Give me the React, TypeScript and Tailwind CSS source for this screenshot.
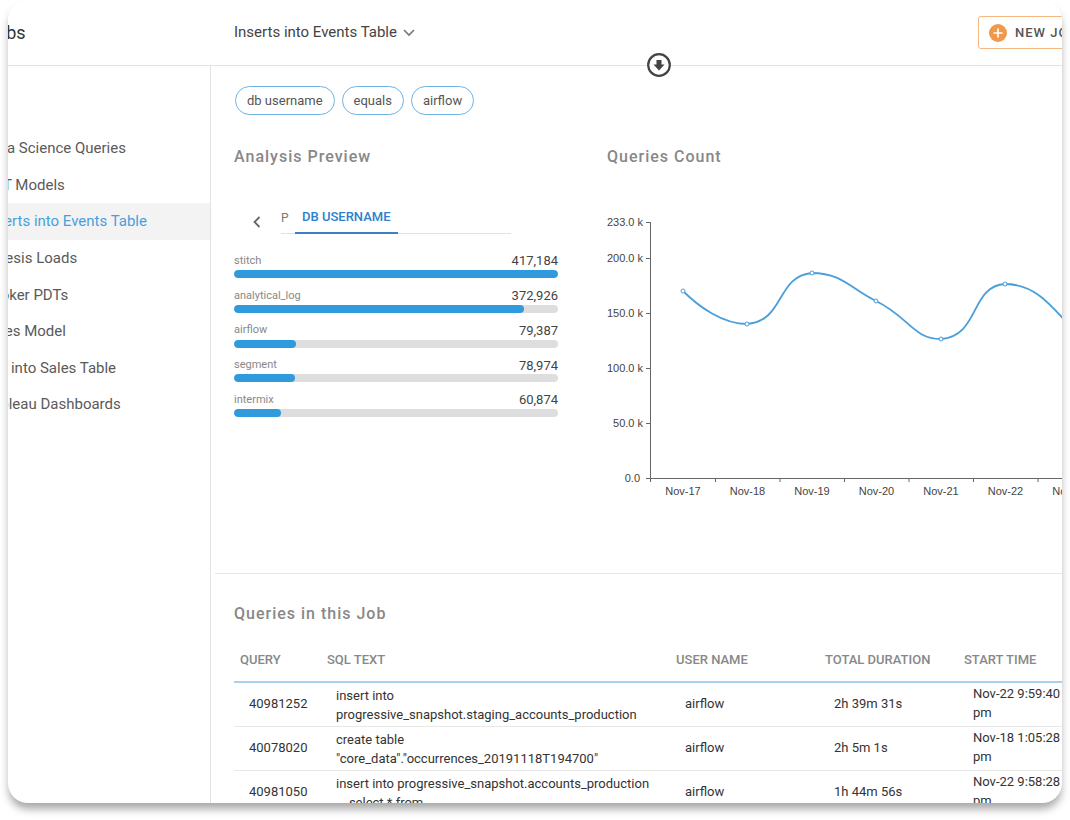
import React from 'react';

const jobs = [
  'Data Science Queries',
  'DBT Models',
  'Inserts into Events Table',
  'Kinesis Loads',
  'Looker PDTs',
  'Sales Model',
  'ELT into Sales Table',
  'Tableau Dashboards',
];

const filters = ['db username', 'equals', 'airflow'];

const users = [
  { name: 'stitch', count: 417184 },
  { name: 'analytical_log', count: 372926 },
  { name: 'airflow', count: 79387 },
  { name: 'segment', count: 78974 },
  { name: 'intermix', count: 60874 },
];

const queries = [
  {
    id: '40981252',
    sql: ['insert into', 'progressive_snapshot.staging_accounts_production'],
    user: 'airflow',
    duration: '2h 39m 31s',
    start: 'Nov-22 9:59:40 pm',
  },
  {
    id: '40078020',
    sql: ['create table', '"core_data"."occurrences_20191118T194700"'],
    user: 'airflow',
    duration: '2h 5m 1s',
    start: 'Nov-18 1:05:28 pm',
  },
  {
    id: '40981050',
    sql: ['insert into progressive_snapshot.accounts_production', '    select * from'],
    user: 'airflow',
    duration: '1h 44m 56s',
    start: 'Nov-22 9:58:28 pm',
  },
];

const yTicks = [
  { label: '233.0 k', y: 13 },
  { label: '200.0 k', y: 49 },
  { label: '150.0 k', y: 104 },
  { label: '100.0 k', y: 159 },
  { label: '50.0 k', y: 214 },
  { label: '0.0', y: 269 },
];

const days = ['Nov-17', 'Nov-18', 'Nov-19', 'Nov-20', 'Nov-21', 'Nov-22', 'Nov-23'];

const points = [
  [76, 82],
  [140, 115],
  [205, 64],
  [269, 92],
  [334, 130],
  [398, 75],
];

const Header = () => (
  <header className="flex h-[66px] shrink-0 items-center border-b border-[#e2e2e2]">
    <div className="w-[233px] shrink-0 pl-2 text-lg text-[#333]">Jobs</div>
    <button className="flex items-center gap-1.5 pl-[23px] text-[15px] text-[#444]">
      Inserts into Events Table
      <svg width="12" height="8" viewBox="0 0 12 8" fill="none" stroke="#777" strokeWidth="1.6">
        <path d="M1 1l5 5 5-5" />
      </svg>
    </button>
    <button className="ml-auto flex h-[33px] w-[124px] shrink-0 items-center gap-2 rounded-[3px] border border-[#f3b77f] pl-[10px] text-[13px] font-medium tracking-[1px] whitespace-nowrap text-[#555]">
      <svg width="18" height="18" viewBox="0 0 18 18">
        <circle cx="9" cy="9" r="9" fill="#f0994a" />
        <path d="M9 4.5v9M4.5 9h9" stroke="#fff" strokeWidth="1.7" />
      </svg>
      NEW JOB
    </button>
  </header>
);

const Sidebar = () => (
  <nav className="w-[233px] shrink-0 border-r border-[#e2e2e2] pt-16">
    <div className="grid h-[293px] grid-rows-8">
      {jobs.map((job) => (
        <a
          key={job}
          href="#"
          className={
            job === 'Inserts into Events Table'
              ? 'flex items-center bg-[#f3f3f3] pl-1.5 text-[15px] text-[#4a9fdb]'
              : 'flex items-center pl-1.5 text-[15px] text-[#5a5a5a]'
          }
        >
          {job}
        </a>
      ))}
    </div>
  </nav>
);

const AnalysisPreview = () => (
  <section className="w-[324px] shrink-0">
    <h2 className="text-base leading-5 font-medium tracking-[1px] text-[#888]">Analysis Preview</h2>
    <div className="mt-[35px] flex h-8 items-stretch">
      <button aria-label="Previous tab" className="w-[47px] pt-2 pl-[19px]">
        <svg width="8" height="12" viewBox="0 0 8 12" fill="none" stroke="#666" strokeWidth="1.8">
          <path d="M6.5 1l-5 5 5 5" />
        </svg>
      </button>
      <div className="flex w-[230px] border-b border-[#e2e2e2] text-[13px] font-medium">
        <button className="w-[14px] text-left text-xs font-normal text-[#777]">P</button>
        <button className="-mb-px border-b-2 border-[#3b7fc9] px-[7px] whitespace-nowrap text-[#2f80cc]">
          DB USERNAME
        </button>
      </div>
    </div>
    <ul className="mt-[18px] grid h-[174px] grid-rows-5">
      {users.map((user) => (
        <li key={user.name}>
          <div className="flex h-[18px] items-center justify-between">
            <span className="text-[11px] text-[#888]">{user.name}</span>
            <span className="text-[13px] text-[#444]">{user.count.toLocaleString('en-US')}</span>
          </div>
          <div className="h-2 overflow-hidden rounded-full bg-[#dedede]">
            <div
              className="h-2 rounded-full bg-[#2f9bdd]"
              style={{ width: `${(user.count / users[0].count) * 100}%` }}
            />
          </div>
        </li>
      ))}
    </ul>
  </section>
);

const QueriesChart = () => (
  <section className="w-[500px] shrink-0">
    <h2 className="text-base leading-5 font-medium tracking-[1px] text-[#888]">Queries Count</h2>
    <svg className="mt-[42px]" width="500" height="300" viewBox="0 0 500 300">
      <g stroke="#666" strokeWidth="1" fill="none">
        <path d="M43.5 13v260M39 269.5h461" />
        {yTicks.map((tick) => (
          <path key={tick.label} d={`M39 ${tick.y + 0.5}h5`} />
        ))}
        {days.map((day, i) => (
          <path key={day} d={`M${108.5 + i * 64.5} 269v4`} />
        ))}
      </g>
      <g fontFamily="'Liberation Sans', sans-serif" fontSize="11" fill="#444">
        {yTicks.map((tick) => (
          <text key={tick.label} x={tick.label === '0.0' ? 33 : 36} y={tick.y + 4} textAnchor="end">
            {tick.label}
          </text>
        ))}
        {days.map((day, i) => (
          <text key={day} x={76 + i * 64.5} y="286" textAnchor="middle">
            {day}
          </text>
        ))}
      </g>
      <path
        d="M76 82C92 98 116 115 140 115C178 112 169 67 205 64C235 64 244 80 269 92C302 108 306 130 334 130C373 127 363 77 398 75C429 75 445 98 463 117"
        fill="none"
        stroke="#4a9fdb"
        strokeWidth="1.8"
      />
      {points.map(([x, y]) => (
        <circle key={x} cx={x} cy={y} r="2" fill="#fff" stroke="#4a9fdb" />
      ))}
    </svg>
  </section>
);

const QueriesTable = () => (
  <section className="ml-1 border-t border-[#e6e6e6] pt-[30px] pl-[19px]">
    <h2 className="text-base leading-5 font-medium tracking-[1px] text-[#888]">Queries in this Job</h2>
    <table className="mt-[26px] w-full table-fixed text-left text-[13px] leading-[19px] text-[#333]">
      <colgroup>
        <col className="w-[87px]" />
        <col className="w-[349px]" />
        <col className="w-[149px]" />
        <col className="w-[139px]" />
        <col />
      </colgroup>
      <thead>
        <tr className="border-b-2 border-[#a9d0e8] align-top text-[#888]">
          <th className="h-[32px] pl-[6px] font-medium">QUERY</th>
          <th className="pl-[6px] font-medium">SQL TEXT</th>
          <th className="pl-[6px] font-medium">USER NAME</th>
          <th className="pl-[6px] font-medium">TOTAL DURATION</th>
          <th className="pl-[6px] font-medium">START TIME</th>
        </tr>
      </thead>
      <tbody>
        {queries.map((query) => (
          <tr key={query.id} className="h-11 border-b border-[#e8e8e8]">
            <td className="pb-0.5 pl-[15px]">{query.id}</td>
            <td className="pt-0.5 pl-[15px] whitespace-pre">
              {query.sql[0]}
              {'\n'}
              {query.sql[1]}
            </td>
            <td className="pb-0.5 pl-[15px]">{query.user}</td>
            <td className="pb-0.5 pl-[15px]">{query.duration}</td>
            <td className="pr-7 pb-0.5 pl-[15px]">{query.start}</td>
          </tr>
        ))}
      </tbody>
    </table>
  </section>
);

export default function App() {
  return (
    <div className="h-screen overflow-hidden bg-white px-2 pb-[17px] font-[Roboto,sans-serif]">
      <div className="h-full overflow-hidden rounded-[20px] bg-white shadow-[0_7px_8px_-1px_rgba(0,0,0,0.35)]">
        {/* the app is wider than its frame and is cut on both sides */}
        <div className="relative -mr-10 -ml-[30px] flex h-full flex-col">
          <Header />
          <button
            aria-label="Collapse header"
            className="absolute top-[53px] left-[669px] rounded-full bg-white"
          >
            <svg width="24" height="24" viewBox="0 0 24 24">
              <circle cx="12" cy="12" r="10.8" fill="#fff" stroke="#444" strokeWidth="2.2" />
              <path d="M9.5 7h5v4.5H17.500L12 17.500l-5.500-6h3z" fill="#444" />
            </svg>
          </button>
          <div className="flex min-h-0 flex-1">
            <Sidebar />
            <main className="min-w-0 flex-1 overflow-hidden">
              <div className="flex gap-[7px] pt-5 pl-6">
                {filters.map((filter) => (
                  <button
                    key={filter}
                    className="h-[29px] rounded-full border border-[#6db3e3] px-[11px] text-[13px] text-[#555]"
                  >
                    {filter}
                  </button>
                ))}
              </div>
              <div className="flex h-[458px] gap-[49px] pt-8 pl-[23px]">
                <AnalysisPreview />
                <QueriesChart />
              </div>
              <QueriesTable />
            </main>
          </div>
        </div>
      </div>
    </div>
  );
}
